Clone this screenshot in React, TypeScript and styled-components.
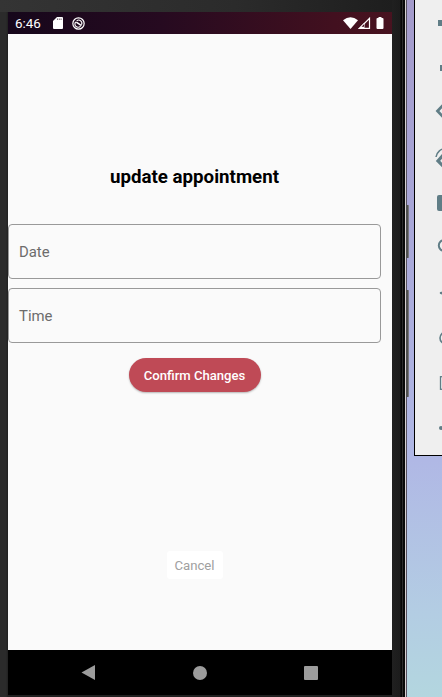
import React from "react";
import styled, { createGlobalStyle } from "styled-components";

const GlobalStyle = createGlobalStyle`
  * { box-sizing: border-box; }
  body { margin: 0; overflow: hidden; font-family: Roboto, sans-serif; }
`;

const Desktop = styled.div`
  display: flex;
  width: 442px;
  height: 697px;
  overflow: hidden;
  background: linear-gradient(180deg, #a49bcb 0%, #a8a6d7 30%, #b0b8e5 66%, #b3cde3 88%, #b3d6df 100%);
`;

const Phone = styled.div`
  position: relative;
  flex: none;
  width: 407px;
  height: 697px;
  padding: 12px 15px 2px 8px;
  background: linear-gradient(90deg, #2b2b2b 0 6px, #202020 8px 392px, #1c1c1c 400px, #070707 401px 402px, #2c2c2c 402px 403px, #080808 403px 405px, #d4cfd0 405px 406px, #55505f 406px 407px);
`;

const BezelTop = styled.div`
  position: absolute;
  left: 0;
  top: 0;
  width: 392px;
  height: 12px;
  background: linear-gradient(90deg, #343434, #2b2b2b 60%, #1e1e1e);
`;

const SideKey = styled.div<{ $top: number; $height: number }>`
  position: absolute;
  left: 406px;
  top: ${(p) => p.$top}px;
  width: 3px;
  height: ${(p) => p.$height}px;
  border-radius: 0 1px 1px 0;
  background: #505050;
  border-right: 1px solid #77777c;
`;

const Screen = styled.div`
  display: flex;
  flex-direction: column;
  width: 384px;
  height: 683px;
  background: #fafafa;
`;

const StatusBar = styled.header`
  display: flex;
  align-items: center;
  height: 22px;
  flex: none;
  padding: 0 7px;
  color: #fff;
  font-size: 13.4px;
  background: linear-gradient(90deg, #16071b, #260a20 40%, #42101f 85%, #481320);
  svg { display: block; }
`;

const Clock = styled.span`
  width: 38px;
  height: 22px;
  line-height: 24px;
`;

const StatusIcons = styled.div<{ $end?: boolean }>`
  display: flex;
  align-items: center;
  gap: ${(p) => (p.$end ? 0 : 9)}px;
  margin-left: ${(p) => (p.$end ? "auto" : 0)};
`;

const Content = styled.main`
  display: flex;
  flex-direction: column;
  align-items: center;
  flex: 1;
  padding-right: 11px;
`;

const Title = styled.h1`
  margin: 130px 0 0;
  height: 26px;
  font-size: 18.7px;
  font-weight: 700;
  line-height: 26px;
  color: #000;
  white-space: nowrap;
`;

const Fields = styled.div`
  display: flex;
  flex-direction: column;
  gap: 9px;
  width: 373px;
  margin-top: 34px;
`;

const Field = styled.div`
  display: flex;
  align-items: center;
  height: 55px;
  padding-left: 10px;
  border: 1px solid #999;
  border-radius: 4px;
  color: #6c6c6c;
  font-size: 14.9px;
`;

const ConfirmButton = styled.button`
  width: 132px;
  height: 34px;
  margin-top: 15px;
  padding: 1px 0 0;
  border: 0;
  border-radius: 17px;
  background: #bf4a56;
  color: #fff;
  font: 500 13.1px Roboto, sans-serif;
  white-space: nowrap;
  box-shadow: 0 1px 2px rgba(0, 0, 0, 0.28);
`;

const CancelButton = styled.button`
  width: 56px;
  height: 28px;
  margin-top: 159px;
  padding: 0;
  border: 0;
  border-radius: 3px;
  background: #fff;
  color: #a0a0a0;
  font: 400 13.2px Roboto, sans-serif;
`;

const NavBar = styled.nav`
  display: flex;
  align-items: center;
  height: 45px;
  flex: none;
  padding-left: 73px;
  gap: 97px;
  background: #000;
  svg { display: block; }
`;

const ToolPanel = styled.aside`
  display: flex;
  flex-direction: column;
  flex: none;
  width: 40px;
  height: 456px;
  margin-left: 7px;
  padding-left: 20px;
  border: solid #000;
  border-width: 0 0 1px 1px;
  background: #efefef;
  overflow: hidden;
`;

const Tool = styled.svg<{ $h: number }>`
  display: block;
  flex: none;
  width: 24px;
  height: ${(p) => p.$h}px;
  fill: none;
  stroke: #607d86;
  stroke-width: 2;
`;

/* Each emulator tool: row height and its drawing. */
const tools = [
  { h: 45, art: <path d="M3 20h12v6H3z" fill="#607d86" stroke="none" /> },
  { h: 44, art: <path d="M5 20h12v6H5z" fill="#607d86" stroke="none" /> },
  { h: 45, art: <path d="M10 14L2.5 22l7.5 8" strokeWidth="2.8" /> },
  { h: 44, art: <><path d="M1 23A10 10 0 0 1 11 14.5" strokeWidth="1.5" /><path d="M10 19L3 27l7 7" strokeWidth="3.2" /></> },
  { h: 45, art: <rect x="2" y="17" width="20" height="16" rx="2" fill="#607d86" stroke="none" /> },
  { h: 45, art: <circle cx="9" cy="22.5" r="5.2" /> },
  { h: 45, art: <path d="M5 25L18 19.5M5 25l13 5.5" strokeWidth="1.4" /> },
  { h: 45, art: <circle cx="11" cy="25" r="6" strokeWidth="1.6" /> },
  { h: 45, art: <rect x="5.5" y="18.7" width="13" height="12.6" strokeWidth="1.3" /> },
  { h: 45, art: <circle cx="6" cy="25" r="2" fill="#607d86" stroke="none" /> },
];

export default function App() {
  return (
    <Desktop>
      <GlobalStyle />
      <Phone>
        <BezelTop />
        <SideKey $top={205} $height={53} />
        <SideKey $top={290} $height={107} />
        <Screen>
          <StatusBar>
            <Clock>6:46</Clock>
            <StatusIcons>
              <svg width="10" height="12" viewBox="0 0 10 12">
                <path d="M4 0h5a1 1 0 0 1 1 1v10a1 1 0 0 1-1 1H1a1 1 0 0 1-1-1V4z" fill="#fff" />
                <path d="M4.5 1.5v1.5M6.3 1.5v1.5M8.1 1.5v1.5" stroke="#260a20" strokeWidth=".6" />
              </svg>
              <svg width="13" height="13" viewBox="0 0 14 14" fill="none" stroke="#fff">
                <circle cx="7" cy="7" r="6.1" strokeWidth="1.3" />
                <path d="M9.2 9.8A3.4 3.4 0 0 1 4 5.2M5 4.2A3.4 3.4 0 0 1 10.2 8.4" strokeWidth="1.2" />
                <path d="M4.6 5.6l5.6 3.6" strokeWidth="1.7" />
              </svg>
            </StatusIcons>
            <StatusIcons $end>
              <svg width="15" height="12" viewBox="0 0 15 12">
                <path d="M0 3.3Q7.5-3 15 3.3L7.5 12z" fill="#fff" />
              </svg>
              <svg width="13" height="12" viewBox="0 0 13 12">
                <path d="M1.5 11.3H11.5V1.3z" fill="none" stroke="#fff" strokeWidth="1.2" />
                <path d="M0 12L6.5 5.5V12z" fill="#fff" />
                <path d="M3.5 9.8H6V7.3z" fill="#42101f" />
              </svg>
              <svg width="14" height="12" viewBox="0 0 14 12">
                <path d="M7.5 0h3v1h1a1 1 0 0 1 1 1v9a1 1 0 0 1-1 1h-5a1 1 0 0 1-1-1V2a1 1 0 0 1 1-1h1z" fill="#fff" />
              </svg>
            </StatusIcons>
          </StatusBar>
          <Content>
            <Title>update appointment</Title>
            <Fields>
              <Field>Date</Field>
              <Field>Time</Field>
            </Fields>
            <ConfirmButton>Confirm Changes</ConfirmButton>
            <CancelButton>Cancel</CancelButton>
          </Content>
          <NavBar>
            <svg width="15" height="15" viewBox="0 0 15 15"><path d="M0.5 7.5L14 0v15z" fill="#9c9c9c" /></svg>
            <svg width="14" height="14" viewBox="0 0 14 14"><circle cx="7" cy="7" r="7" fill="#9c9c9c" /></svg>
            <svg width="14" height="14" viewBox="0 0 14 14"><rect width="14" height="14" rx="1" fill="#9c9c9c" /></svg>
          </NavBar>
        </Screen>
      </Phone>
      <ToolPanel>
        {tools.map((t, i) => (
          <Tool key={i} $h={t.h} viewBox={`0 0 24 ${t.h}`}>{t.art}</Tool>
        ))}
      </ToolPanel>
    </Desktop>
  );
}
